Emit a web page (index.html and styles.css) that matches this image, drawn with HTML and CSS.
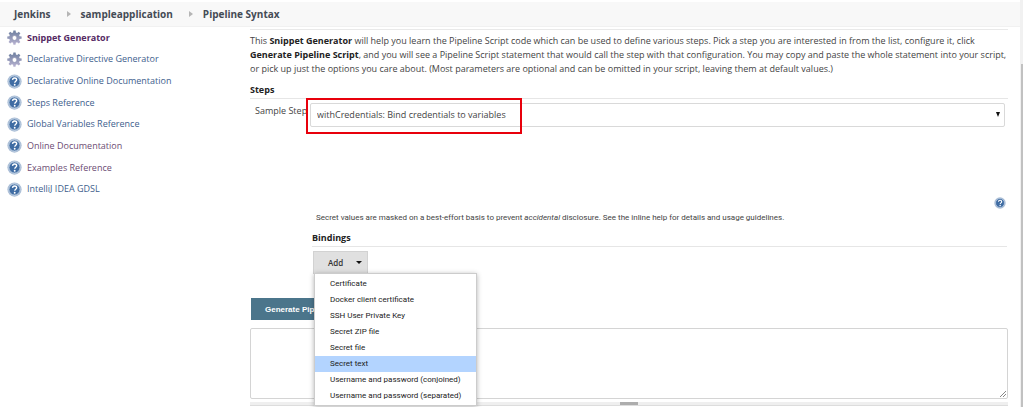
FILE: index.html
```html
<!DOCTYPE html>
<html lang="en">
<head>
<meta charset="utf-8">
<title>Pipeline Syntax [Jenkins]</title>
<link rel="stylesheet" href="styles.css">
</head>
<body>
<svg class="defs" aria-hidden="true">
  <defs>
    <linearGradient id="steel" x1="0" y1="0" x2="0" y2="1">
      <stop offset="0" stop-color="#6d7f9f"/><stop offset="1" stop-color="#b9b3d2"/>
    </linearGradient>
    <symbol id="gear" viewBox="0 0 16 16">
      <g fill="url(#steel)">
        <path d="M6.8.5h2.4l.3 2.2 1.3.5L12.600 1.900l1.700 1.700-1.400 1.800.5 1.300 2.200.3v2.200l-2.200.4-.5 1.300 1.300 1.800-1.700 1.700-1.800-1.300-1.300.6-.3 2.100H6.800l-.3-2.100-1.300-.6-1.800 1.300-1.700-1.700 1.300-1.800-.5-1.300-2.200-.4V7l2.200-.3.5-1.300-1.300-1.800 1.700-1.700 1.800 1.300 1.300-.5z"/>
      </g>
      <circle cx="8" cy="8.500" r="2.600" fill="#fff" stroke="#8d92b2" stroke-width=".8"/>
    </symbol>
    <symbol id="help" viewBox="0 0 16 16">
      <circle cx="8" cy="8" r="7.600" fill="#a9bdd6"/>
      <circle cx="8" cy="8" r="5.900" fill="#3f6ca3" stroke="#dbe5f0" stroke-width=".7"/>
      <path d="M5.900 6.300C6 4.800 7 4.300 8.100 4.300c1.300 0 2.200.7 2.200 1.900 0 1.600-2 1.600-2 3.100" fill="none" stroke="#fff" stroke-width="1.500"/>
      <circle cx="8.200" cy="11.400" r="1" fill="#fff"/>
    </symbol>
  </defs>
</svg>
<div class="page">
  <header class="crumbs">
    <a href="#">Jenkins</a>
    <svg class="sep" viewBox="0 0 4 6"><path d="M0 0l4 3-4 3z"/></svg>
    <a href="#">sampleapplication</a>
    <svg class="sep" viewBox="0 0 4 6"><path d="M0 0l4 3-4 3z"/></svg>
    <a href="#">Pipeline Syntax</a>
  </header>
  <div class="body">
    <nav class="side">
      <a class="current" href="#"><svg><use href="#gear"/></svg>Snippet Generator</a>
      <a href="#"><svg><use href="#gear"/></svg>Declarative Directive Generator</a>
      <a href="#"><svg><use href="#help"/></svg>Declarative Online Documentation</a>
      <a href="#"><svg><use href="#help"/></svg>Steps Reference</a>
      <a href="#"><svg><use href="#help"/></svg>Global Variables Reference</a>
      <a class="visited" href="#"><svg><use href="#help"/></svg>Online Documentation</a>
      <a class="visited" href="#"><svg><use href="#help"/></svg>Examples Reference</a>
      <a href="#"><svg><use href="#help"/></svg>IntelliJ IDEA GDSL</a>
    </nav>
    <main class="main">
      <p class="intro">This <b>Snippet Generator</b> will help you learn the Pipeline Script code which can be used to define various steps. Pick a step you are interested in from the list, configure it, click<br><b>Generate Pipeline Script</b>, and you will see a Pipeline Script statement that would call the step with that configuration. You may copy and paste the whole statement into your script,<br>or pick up just the options you care about. (Most parameters are optional and can be omitted in your script, leaving them at default values.)</p>
      <h2 class="heading">Steps</h2>
      <div class="field">
        <label for="step">Sample Step</label>
        <div class="picker">
          <select id="step"><option>withCredentials: Bind credentials to variables</option></select>
          <svg class="arrow" viewBox="0 0 4 5"><path d="M0 0h4L2 5z"/></svg>
          <span class="mark"></span>
        </div>
      </div>
      <section class="config">
        <button class="help" type="button" aria-label="Help"><svg><use href="#help"/></svg></button>
        <p class="note">Secret values are masked on a best-effort basis to prevent <i>accidental</i> disclosure. See the inline help for details and usage guidelines.</p>
        <h2 class="heading">Bindings</h2>
        <div class="adder">
          <button class="add" type="button">Add<svg viewBox="0 0 6 3"><path d="M0 0h6L3 3z"/></svg></button>
          <div class="menu" role="menu">
            <button type="button" role="menuitem">Certificate</button>
            <button type="button" role="menuitem">Docker client certificate</button>
            <button type="button" role="menuitem">SSH User Private Key</button>
            <button type="button" role="menuitem">Secret ZIP file</button>
            <button type="button" role="menuitem">Secret file</button>
            <button class="active" type="button" role="menuitem">Secret text</button>
            <button type="button" role="menuitem">Username and password (conjoined)</button>
            <button type="button" role="menuitem">Username and password (separated)</button>
          </div>
        </div>
      </section>
      <button class="generate" type="button">Generate Pipeline Script</button>
      <div class="output">
        <textarea aria-label="Pipeline script"></textarea>
        <svg class="grip" viewBox="0 0 6 6"><path d="M0 6l6-6M3 6l3-3"/></svg>
      </div>
      <div class="resizer"><span></span></div>
    </main>
  </div>
  <div class="scroll"><span></span></div>
</div>
</body>
</html>
```
FILE: styles.css
```css
* { box-sizing: border-box; }
body {
  margin: 0;
  background: #fff;
  color: #444;
  font: 9px/14px "Open Sans", "Noto Sans", sans-serif;
}
a { color: inherit; text-decoration: none; }
button, select, textarea { font: inherit; color: inherit; margin: 0; }
p, h2 { margin: 0; }
svg { flex: none; }
.defs { position: absolute; width: 0; height: 0; }
.page { position: relative; height: 100vh; overflow: hidden; }

.crumbs {
  display: flex;
  align-items: center;
  height: 25px;
  margin: 2px 3px 0 0;
  padding-left: 14px;
  background: #f8f8f8;
  border-bottom: 1px solid #f1f1f1;
  color: #444b55;
  font-size: 10px;
  font-weight: 700;
}
.sep { width: 4px; height: 6px; margin: 0 10px 0 16px; fill: #b5b5b5; }

.body {
  display: grid;
  grid-template-columns: 250px minmax(0, 1fr);
  padding-right: 15px;
}
.side {
  display: grid;
  grid-auto-rows: 1fr;
  height: 173px;
  padding-left: 7px;
  color: #40608d;
}
.side a { display: flex; align-items: center; gap: 5px; }
.side svg { width: 15px; height: 15px; }
.side .current { color: #552a63; font-weight: 700; }
.side .visited { color: #6c4b73; }

.intro {
  margin-top: 2px;
  padding: 4px 0 5px;
  border-top: 1px solid #e9e9e9;
  white-space: nowrap;
}
.intro b { font-weight: 700; color: #222; }
.heading {
  height: 18px;
  border-bottom: 1px solid #e6e6e6;
  color: #222;
  font-size: 9px;
  font-weight: 700;
  line-height: 17px;
}
.field {
  display: grid;
  grid-template-columns: 55px minmax(0, 1fr);
  padding: 4px 3px 0 5px;
}
.field label { white-space: nowrap; padding-top: 1px; }
.picker { position: relative; }
.picker select {
  display: block;
  width: 100%;
  height: 24px;
  padding: 0 6px;
  appearance: none;
  background: #fff;
  border: 1px solid #d9d9d9;
  border-radius: 2px;
}
.arrow { position: absolute; right: 5px; top: 9px; width: 4px; height: 5px; fill: #111; }
.mark {
  position: absolute;
  left: -4px;
  top: -5px;
  width: 216px;
  height: 36px;
  border: 2px solid #e8000c;
  pointer-events: none;
}

.config { padding: 70px 1px 0 62px; }
.help {
  display: block;
  width: 12px;
  height: 12px;
  margin-left: auto;
  margin-right: 1px;
  padding: 0;
  border: 0;
  background: none;
}
.help svg { display: block; width: 12px; height: 12px; }
.note { padding: 2px 0 4px 4px; font-family: Roboto, sans-serif; font-size: 8px; }
.adder { position: relative; padding: 4px 0 0 1px; }
.add {
  display: flex;
  align-items: center;
  gap: 13px;
  height: 23px;
  padding: 0 5px 0 14px;
  border: 1px solid #d2d2d2;
  background: #e0e0e0;
  color: #333;
  font-size: 8px;
  font-weight: 600;
}
.add svg { width: 6px; height: 3px; fill: #111; }
.menu {
  position: absolute;
  z-index: 2;
  left: 2px;
  top: 26px;
  display: flex;
  flex-direction: column;
  width: 163px;
  padding: 2px 0 1px;
  background: #fff;
  border: 1px solid #ccc;
  box-shadow: 0 1px 5px rgba(0, 0, 0, .3);
}
.menu button {
  height: 16px;
  padding: 0 15px;
  border: 0;
  background: none;
  color: #222;
  font-family: Roboto, sans-serif;
  font-size: 8px;
  text-align: left;
  white-space: nowrap;
}
.menu .active { background: #b3d4ff; }

.generate {
  display: block;
  height: 22px;
  margin: 24px 0 8px 1px;
  padding: 0 14px;
  border: 0;
  background: #4b758b;
  color: #fff;
  font: bold 8px "Liberation Sans", sans-serif;
}
.output { position: relative; }
.output textarea {
  display: block;
  width: 100%;
  height: 71px;
  border: 1px solid #d4d4d4;
  border-radius: 2px;
  background: #fff;
  resize: none;
}
.grip { position: absolute; right: 2px; bottom: 2px; width: 6px; height: 6px; fill: none; stroke: #888; stroke-width: 1; }
.resizer {
  display: flex;
  justify-content: center;
  height: 4px;
  margin-top: 3px;
  background: #efefef;
  border-bottom: 1px solid #ddd;
}
.resizer span { width: 18px; height: 3px; background: #adadad; }

.scroll {
  position: absolute;
  right: 0;
  top: 0;
  bottom: 0;
  width: 3px;
  padding-top: 64px;
  background: #f1f1f1;
}
.scroll span { display: block; height: 100%; margin-left: 1px; background: #c1c1c1; }
```
